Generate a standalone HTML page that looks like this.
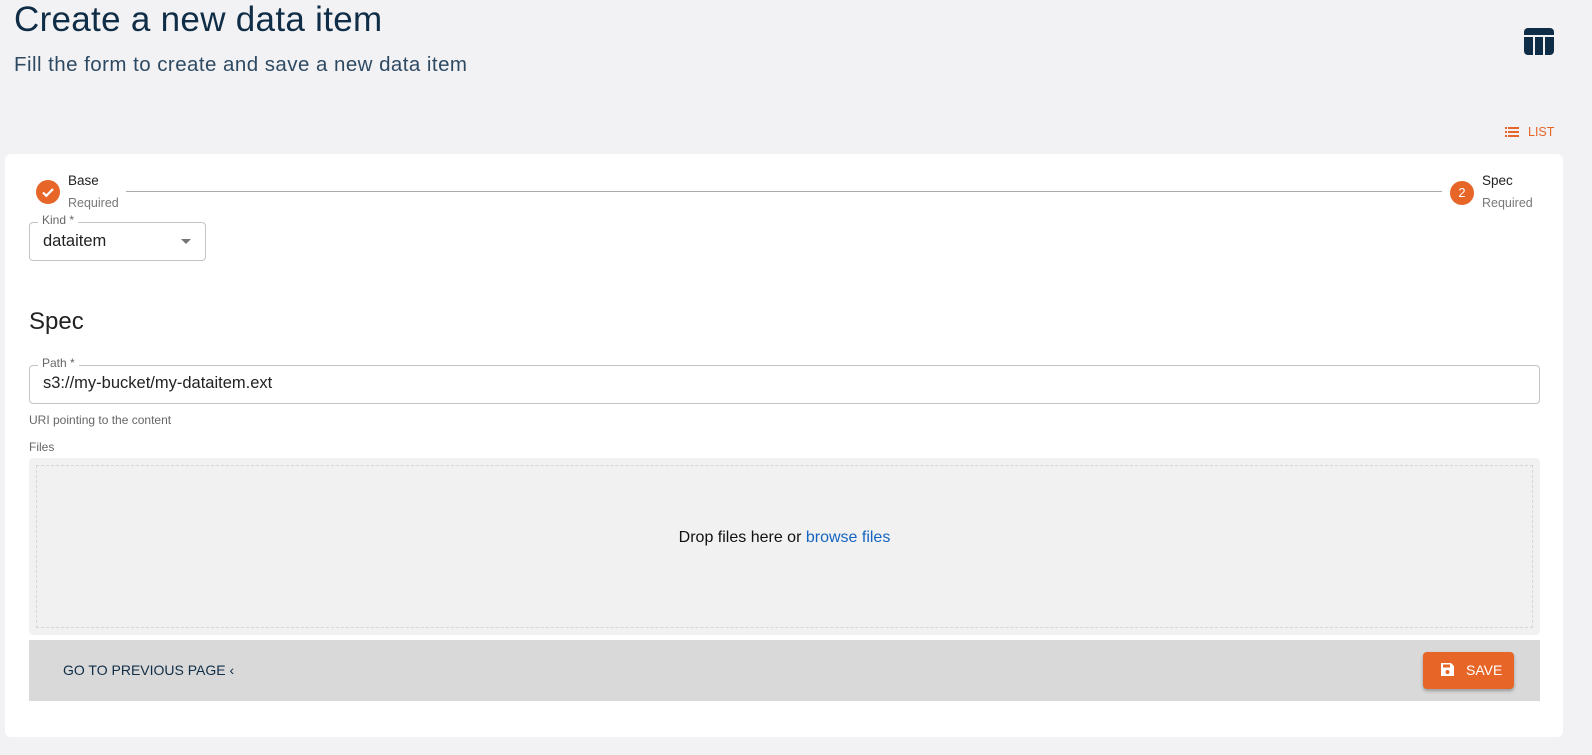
<!DOCTYPE html>
<html><head><meta charset="utf-8"><style>
*{box-sizing:border-box;margin:0;padding:0}
body{width:1592px;height:755px;background:#f2f2f4;font-family:"Liberation Sans","DejaVu Sans",sans-serif;position:relative;overflow:hidden;color:#1a1a1a}
.abs{position:absolute}
h1{position:absolute;left:14px;top:0px;font-size:35px;font-weight:400;color:#0f2d46;letter-spacing:0.3px}
.sub{left:14px;top:53px;font-size:20.5px;color:#2e4a63;letter-spacing:0.45px}
.card{left:5px;top:154px;width:1558px;height:583px;background:#fff;border-radius:6px}
.step{font-size:13.5px;color:#222}
.req{font-size:12.5px;color:#777}
.circ{width:24px;height:24px;border-radius:50%;background:#e66527;color:#fff;font-size:13px;text-align:center;line-height:24px}
.fld{border:1px solid #c4c4c4;border-radius:4px}
.lbl{font-size:12px;color:#666;background:#fff;padding:0 4px}
</style></head><body>
<h1>Create a new data item</h1>
<div class="abs sub">Fill the form to create and save a new data item</div>
<svg class="abs" style="left:1524px;top:28px" width="30" height="27" viewBox="0 0 30 27"><rect x="0" y="0" width="30" height="27" rx="4" fill="#0f2d46"/><rect x="0" y="7" width="30" height="2" fill="#f2f2f4"/><rect x="9" y="9" width="2" height="18" fill="#f2f2f4"/><rect x="19" y="9" width="2" height="18" fill="#f2f2f4"/></svg>
<svg class="abs" style="left:1505px;top:127px" width="14" height="10" viewBox="0 0 14 10"><g fill="#e66527"><rect x="0" y="0" width="2" height="2"/><rect x="3" y="0" width="11" height="2"/><rect x="0" y="4" width="2" height="2"/><rect x="3" y="4" width="11" height="2"/><rect x="0" y="8" width="2" height="2"/><rect x="3" y="8" width="11" height="2"/></g></svg>
<div class="abs" style="left:1528px;top:125px;font-size:12.5px;color:#e66527">LIST</div>
<div class="abs card"></div>
<div class="abs circ" style="left:36px;top:180px"><svg width="24" height="24" viewBox="0 0 24 24"><path d="M7 12.5l3.3 3.3L17 9" stroke="#fff" stroke-width="2.2" fill="none"/></svg></div>
<div class="abs step" style="left:68px;top:173px">Base</div>
<div class="abs req" style="left:68px;top:196px">Required</div>
<div class="abs" style="left:126px;top:191px;width:1316px;height:1px;background:#aaa"></div>
<div class="abs circ" style="left:1450px;top:181px">2</div>
<div class="abs step" style="left:1482px;top:173px">Spec</div>
<div class="abs req" style="left:1482px;top:196px">Required</div>
<div class="abs fld" style="left:29px;top:222px;width:177px;height:39px"></div>
<div class="abs lbl" style="left:38px;top:213px">Kind *</div>
<div class="abs" style="left:43px;top:232px;font-size:16.5px;color:#222">dataitem</div>
<div class="abs" style="left:181px;top:239px;width:0;height:0;border-left:5px solid transparent;border-right:5px solid transparent;border-top:5px solid #757575"></div>
<div class="abs" style="left:29px;top:308px;font-size:24px;color:#222">Spec</div>
<div class="abs fld" style="left:29px;top:365px;width:1511px;height:39px"></div>
<div class="abs lbl" style="left:38px;top:356px">Path *</div>
<div class="abs" style="left:43px;top:374px;font-size:16.5px;color:#222">s3://my-bucket/my-dataitem.ext</div>
<div class="abs" style="left:29px;top:413px;font-size:12px;color:#666">URI pointing to the content</div>
<div class="abs" style="left:29px;top:440px;font-size:12px;color:#666">Files</div>
<div class="abs" style="left:29px;top:458px;width:1511px;height:177px;background:#f1f1f1;border-radius:4px"></div>
<div class="abs" style="left:36px;top:465px;width:1497px;height:163px;border:1px dashed #d6d6d6"></div>
<div class="abs" style="left:0;width:1569px;top:529px;text-align:center;font-size:16px;color:#111">Drop files here or <span style="color:#1565c0">browse files</span></div>
<div class="abs" style="left:29px;top:640px;width:1511px;height:61px;background:#d9d9d9"></div>
<div class="abs" style="left:63px;top:662px;font-size:14px;color:#0f2d46">GO TO PREVIOUS PAGE ‹</div>
<div class="abs" style="left:1423px;top:652px;width:91px;height:37px;background:#e66527;border-radius:4px;box-shadow:0 2px 3px rgba(0,0,0,.3)"></div>
<svg class="abs" style="left:1440px;top:662px" width="15" height="15" viewBox="0 0 15 15"><path d="M1 1h10l3 3v10H1z" fill="#fff"/><rect x="3" y="2.5" width="7" height="3" fill="#e66527"/><circle cx="7.5" cy="10" r="2" fill="#e66527"/></svg>
<div class="abs" style="left:1466px;top:662px;font-size:14px;color:#fff">SAVE</div>
</body></html>
